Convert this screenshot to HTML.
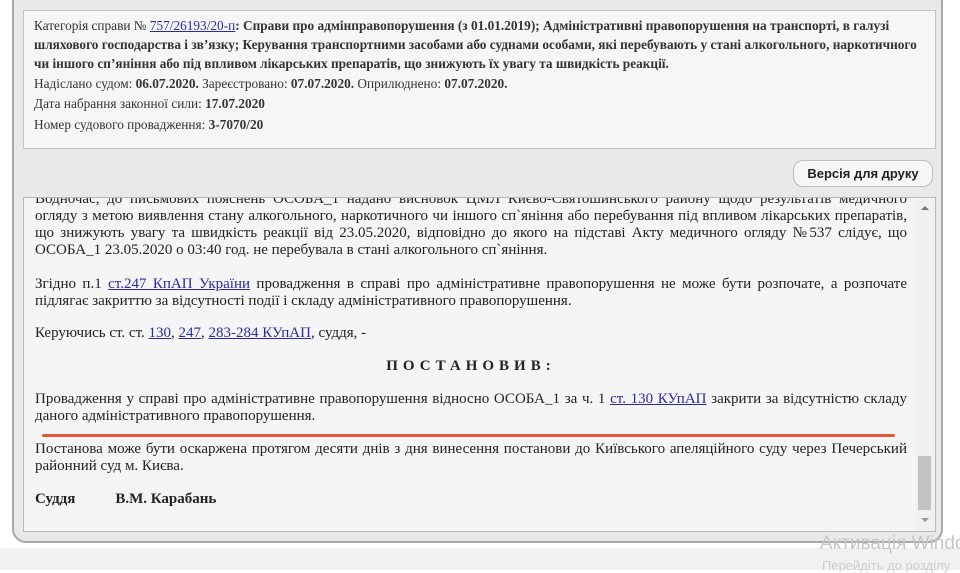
<!DOCTYPE html>
<html><head><meta charset="utf-8"><style>
body{margin:0;width:960px;height:570px;background:#fff;position:relative;overflow:hidden;font-family:"Liberation Serif","DejaVu Serif",serif;color:#222}
.outer{position:absolute;left:12px;top:-12px;width:931px;height:555px;background:#e9e9e9;border:2px solid #a8a8a8;border-radius:14px;box-sizing:border-box}
.hdr{position:absolute;left:23px;top:10px;width:913px;height:139px;background:#f6f6f6;border:1px solid #c4c4c4;box-sizing:border-box}
.h{position:absolute;left:34px;font-size:13.3px;white-space:nowrap;color:#333}
.content{position:absolute;left:23px;top:197px;width:913px;height:335px;background:#f5f5f5;border:1px solid #b8b8b8;box-sizing:border-box;overflow:hidden}
.l{position:absolute;left:11px;width:872px;font-size:15px;line-height:17px;white-space:nowrap;color:#222}
.j{text-align:justify;text-align-last:justify}
a{color:#2b2ba0;text-decoration:underline}
.btn{position:absolute;left:793px;top:160px;width:140px;height:27px;border:1px solid #bdbdbd;border-radius:10px;background:#f7f7f7;box-sizing:border-box;font-family:"Liberation Sans",sans-serif;font-weight:bold;font-size:13px;text-align:center;line-height:25px;color:#222}
.sb{position:absolute;left:892px;top:0;width:18px;height:333px;background:#f0f0f0}
.thumb{position:absolute;left:2px;top:258px;width:13px;height:54px;background:#c2c2c2}
.bottom{position:absolute;left:0;top:548px;width:960px;height:22px;background:#f1f1f1}
.act{position:absolute;left:820px;top:533px;font-family:"Liberation Sans",sans-serif;font-size:19px;color:#c6c6c6;white-space:nowrap}
.act2{position:absolute;left:822px;top:558px;font-family:"Liberation Sans",sans-serif;font-size:13px;color:#ccc;white-space:nowrap}
</style></head><body>
<div class="outer"></div>
<div class="hdr"></div>
<div class="h" style="top:18px">Категорія справи № <a href="#">757/26193/20-п</a><b>: Справи про адмінправопорушення (з 01.01.2019); Адміністративні правопорушення на транспорті, в галузі</b></div>
<div class="h" style="top:37px"><b>шляхового господарства і зв’язку; Керування транспортними засобами або суднами особами, які перебувають у стані алкогольного, наркотичного</b></div>
<div class="h" style="top:56px"><b>чи іншого сп’яніння або під впливом лікарських препаратів, що знижують їх увагу та швидкість реакції.</b></div>
<div class="h" style="top:76px">Надіслано судом: <b>06.07.2020.</b> Зареєстровано: <b>07.07.2020.</b> Оприлюднено: <b>07.07.2020.</b></div>
<div class="h" style="top:96px">Дата набрання законної сили: <b>17.07.2020</b></div>
<div class="h" style="top:117px">Номер судового провадження: <b>3-7070/20</b></div>
<div class="btn">Версія для друку</div>
<div class="content">
<div class="l j" style="top:-7px">Водночас, до письмових пояснень ОСОБА_1 надано висновок ЦМЛ Києво-Святошинського району щодо результатів медичного</div>
<div class="l j" style="top:10px">огляду з метою виявлення стану алкогольного, наркотичного чи іншого сп`яніння або перебування під впливом лікарських препаратів,</div>
<div class="l j" style="top:27px">що знижують увагу та швидкість реакції від 23.05.2020, відповідно до якого на підставі Акту медичного огляду №537 слідує, що</div>
<div class="l" style="top:44px">ОСОБА_1 23.05.2020 о 03:40 год. не перебувала в стані алкогольного сп`яніння.</div>
<div class="l j" style="top:78px">Згідно п.1 <a href="#">ст.247 КпАП України</a> провадження в справі про адміністративне правопорушення не може бути розпочате, а розпочате</div>
<div class="l" style="top:95px">підлягає закриттю за відсутності події і складу адміністративного правопорушення.</div>
<div class="l" style="top:127px">Керуючись ст. ст. <a href="#">130</a>, <a href="#">247</a>, <a href="#">283-284 КУпАП</a>, суддя, -</div>
<div class="l" style="top:160px;text-align:center;font-weight:bold;letter-spacing:5px;font-size:15px">ПОСТАНОВИВ:</div>
<div class="l j" style="top:193px">Провадження у справі про адміністративне правопорушення відносно ОСОБА_1 за ч. 1 <a href="#">ст. 130 КУпАП</a> закрити за відсутністю складу</div>
<div class="l" style="top:210px">даного адміністративного правопорушення.</div>
<div style="position:absolute;left:18px;top:236px;width:853px;height:3px;background:#e8563a;border-radius:2px"></div>
<div class="l j" style="top:243px">Постанова може бути оскаржена протягом десяти днів з дня винесення постанови до Київського апеляційного суду через Печерський</div>
<div class="l" style="top:260px">районний суд м. Києва.</div>
<div class="l" style="top:293px;font-weight:bold">Суддя<span style="display:inline-block;width:40px"></span>В.М. Карабань</div>
<div class="sb"><div style="position:absolute;left:5px;top:8px;border:4px solid transparent;border-bottom:4px solid #777;border-top:0"></div><div class="thumb"></div><div style="position:absolute;left:5px;top:320px;border:4px solid transparent;border-top:4px solid #999;border-bottom:0"></div></div>
</div>
<div class="bottom"></div>
<div class="act">Активація Windows</div>
<div class="act2">Перейдіть до розділу</div>
</body></html>
